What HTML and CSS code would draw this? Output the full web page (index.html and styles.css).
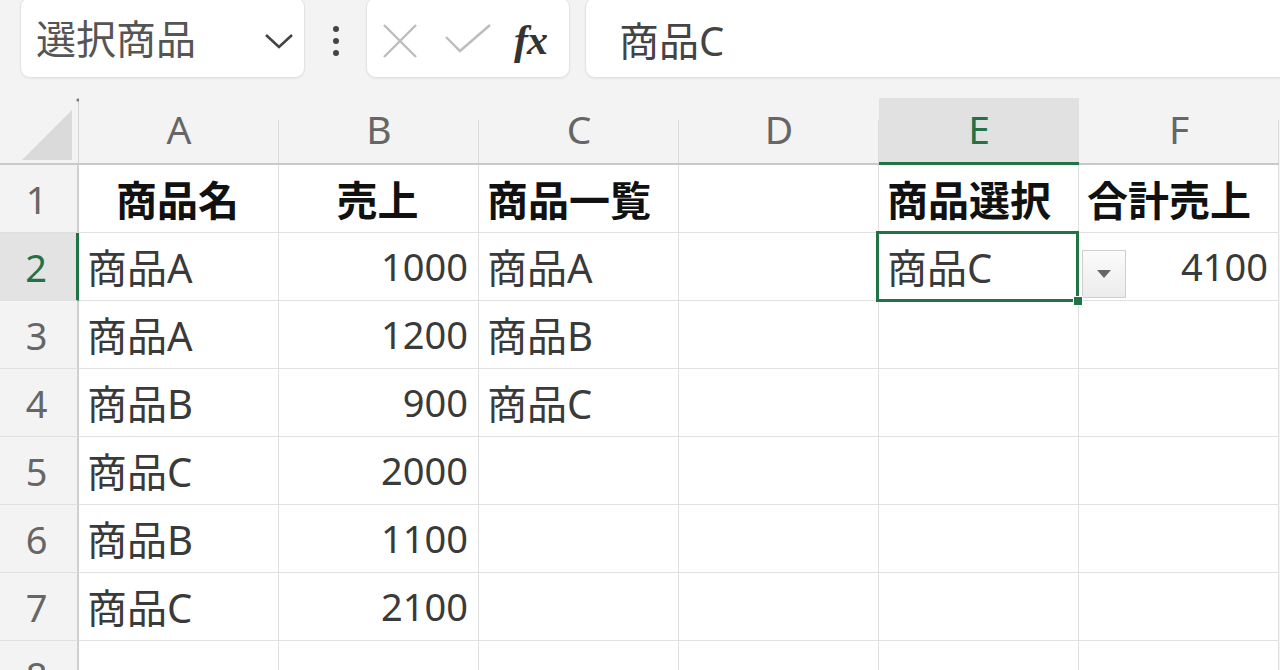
FILE: index.html
```html
<!DOCTYPE html>
<html lang="ja">
<head>
<meta charset="utf-8">
<title>Sheet</title>
<link rel="stylesheet" href="styles.css">
</head>
<body>
<div class="toolbar">
  <div class="namebox">
    <span class="name-text">選択商品</span>
    <svg class="chev" width="30" height="18" viewBox="0 0 30 18"><polyline points="2,3 15,15 28,3" fill="none" stroke="#444" stroke-width="2.6"/></svg>
  </div>
  <div class="dots"><i></i><i></i><i></i></div>
  <div class="fbtns">
    <svg width="36" height="36" viewBox="0 0 36 36"><path d="M2 2 L34 34 M34 2 L2 34" stroke="#bdbdbd" stroke-width="2.4" fill="none"/></svg>
    <svg width="48" height="32" viewBox="0 0 48 32"><polyline points="2,14 16,28 46,2" stroke="#bdbdbd" stroke-width="2.4" fill="none"/></svg>
    <span class="fx">fx</span>
  </div>
  <div class="formula">商品C</div>
</div>

<div class="sheet">
  <div class="corner"><svg width="79" height="67" viewBox="0 0 79 67"><polygon points="72,12 72,62 22,62" fill="#dadada"/><circle cx="78" cy="2" r="1.6" fill="#777"/></svg></div>
  <div class="ch">A</div>
  <div class="ch">B</div>
  <div class="ch">C</div>
  <div class="ch">D</div>
  <div class="ch sel">E</div>
  <div class="ch">F</div>

  <div class="rh">1</div>
  <div class="c b center">商品名</div>
  <div class="c b center">売上</div>
  <div class="c b">商品一覧</div>
  <div class="c"></div>
  <div class="c b">商品選択</div>
  <div class="c b">合計売上</div>

  <div class="rh sel">2</div>
  <div class="c">商品A</div>
  <div class="c num">1000</div>
  <div class="c">商品A</div>
  <div class="c"></div>
  <div class="c active">商品C<span class="dd"><svg width="14" height="8" viewBox="0 0 14 8"><polygon points="0,0 14,0 7,8" fill="#666"/></svg></span></div>
  <div class="c num">4100</div>

  <div class="rh">3</div>
  <div class="c">商品A</div>
  <div class="c num">1200</div>
  <div class="c">商品B</div>
  <div class="c"></div>
  <div class="c"></div>
  <div class="c"></div>

  <div class="rh">4</div>
  <div class="c">商品B</div>
  <div class="c num">900</div>
  <div class="c">商品C</div>
  <div class="c"></div>
  <div class="c"></div>
  <div class="c"></div>

  <div class="rh">5</div>
  <div class="c">商品C</div>
  <div class="c num">2000</div>
  <div class="c"></div>
  <div class="c"></div>
  <div class="c"></div>
  <div class="c"></div>

  <div class="rh">6</div>
  <div class="c">商品B</div>
  <div class="c num">1100</div>
  <div class="c"></div>
  <div class="c"></div>
  <div class="c"></div>
  <div class="c"></div>

  <div class="rh">7</div>
  <div class="c">商品C</div>
  <div class="c num">2100</div>
  <div class="c"></div>
  <div class="c"></div>
  <div class="c"></div>
  <div class="c"></div>

  <div class="rh">8</div>
  <div class="c"></div>
  <div class="c"></div>
  <div class="c"></div>
  <div class="c"></div>
  <div class="c"></div>
  <div class="c"></div>
</div>
</body>
</html>
```

FILE: styles.css
```css
* { box-sizing: border-box; }
html, body {
  margin: 0;
  padding: 0;
  height: 670px;
  overflow: hidden;
  background: #f3f3f3;
  font-family: "Noto Sans", "Noto Sans CJK JP", sans-serif;
  font-size: 40px;
  color: #3a3a3a;
}

.toolbar {
  display: flex;
  align-items: stretch;
  height: 78px;
  margin-bottom: 20px;
}
.namebox, .fbtns, .formula {
  background: #fff;
  border: 1px solid #e3e3e3;
  border-radius: 10px;
  margin-top: -3px;
  height: 81px;
  box-shadow: 0 1px 2px rgba(0,0,0,0.06);
}
.namebox {
  margin-left: 20px;
  width: 285px;
  display: flex;
  align-items: center;
  justify-content: space-between;
  padding: 3px 10px 0 15px;
}
.name-text { color: #555; line-height: 1; }
.chev { margin-top: 4px; }

.dots {
  width: 61px;
  display: flex;
  flex-direction: column;
  align-items: center;
  justify-content: center;
  gap: 6px;
  padding-top: 3px;
}
.dots i {
  display: block;
  width: 6px;
  height: 6px;
  border-radius: 50%;
  background: #444;
}

.fbtns {
  width: 204px;
  display: flex;
  align-items: center;
  padding: 4px 0 0 15px;
}
.fbtns svg:first-child { margin-right: 26px; margin-top: 2px; }
.fbtns svg:nth-child(2) { margin-right: 22px; margin-top: -2px; }
.fx {
  font-family: "Liberation Serif", "DejaVu Serif", serif;
  font-style: italic;
  font-weight: bold;
  font-size: 42px;
  color: #333;
  line-height: 1;
  letter-spacing: -1px;
}

.formula {
  flex: 1;
  margin-left: 15px;
  margin-right: -20px;
  display: flex;
  align-items: center;
  padding: 2px 0 0 33px;
  color: #444;
}

.sheet {
  display: grid;
  grid-template-columns: 79px repeat(6, 200px);
  grid-template-rows: 67px repeat(8, 68px);
}
.corner {
  background: #f3f3f3;
  border-bottom: 2px solid #c9c9c9;
  border-right: 1px solid #d3d3d3;
}
.corner svg { display: block; }
.ch {
  background: #f3f3f3 linear-gradient(#dcdcdc, #dcdcdc) right 22px / 1px calc(100% - 22px) no-repeat;
  border-bottom: 2px solid #c9c9c9;
  display: flex;
  align-items: center;
  justify-content: center;
  color: #666;
  font-size: 39px;
  padding-bottom: 4px;
}
.ch.sel {
  background: #e1e1e1;
  border-bottom: 3px solid #217346;
  color: #217346;
}
.rh {
  background: #f3f3f3;
  border-right: 2px solid #cfcfcf;
  border-bottom: 1px solid #e0e0e0;
  display: flex;
  align-items: center;
  justify-content: center;
  color: #666;
  font-size: 38px;
  padding-right: 4px;
}
.rh.sel {
  background: #e3e3e3;
  border-right: 3px solid #217346;
  color: #217346;
}
.c {
  background: #fff;
  border-right: 1px solid #e1e1e1;
  border-bottom: 1px solid #e1e1e1;
  display: flex;
  align-items: center;
  padding: 0 10px 2px 8px;
  white-space: nowrap;
  color: #3a3a3a;
}
.c.b { font-weight: bold; color: #111; font-size: 41px; }
.c.center { justify-content: center; }
.c.num { justify-content: flex-end; font-size: 38px; }
.c.active {
  position: relative;
  z-index: 2;
}
.c.active::before {
  content: "";
  position: absolute;
  left: -3px;
  top: -2px;
  right: -1px;
  bottom: -2px;
  border: 3px solid #217346;
  pointer-events: none;
}
.c.active::after {
  content: "";
  position: absolute;
  right: -5px;
  bottom: -6px;
  width: 8px;
  height: 8px;
  background: #217346;
  border: 1px solid #fff;
}
.dd {
  position: absolute;
  left: 203px;
  top: 17px;
  width: 44px;
  height: 48px;
  background: linear-gradient(#fbfbfb, #ececec);
  border: 1px solid #cfcfcf;
  display: flex;
  align-items: center;
  justify-content: center;
}
.dd svg { display: block; }
```
